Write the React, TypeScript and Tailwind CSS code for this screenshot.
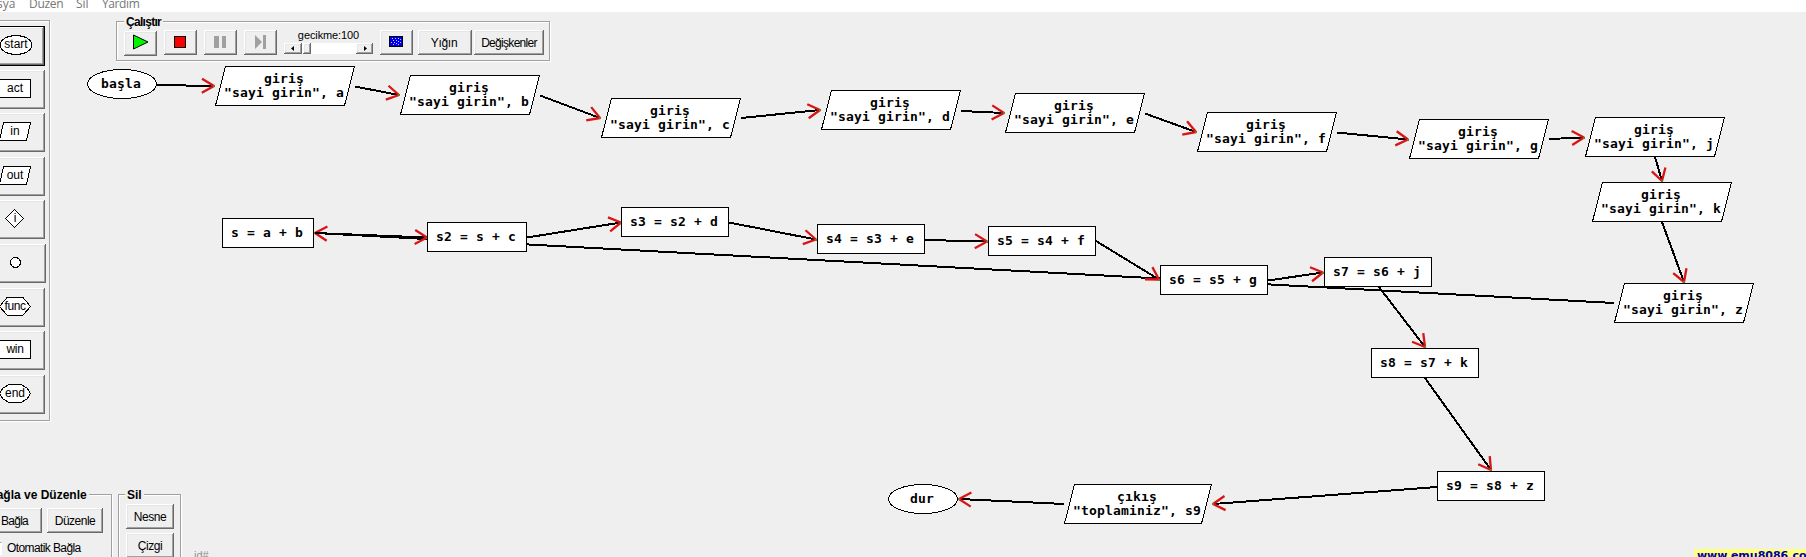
import type { ReactNode } from "react";

type Kind = "box" | "io" | "oval";
type FlowNode = { kind: Kind; x: number; y: number; w: number; lines: string[] };

const nodes: FlowNode[] = [
  { kind: "oval", x: 87, y: 69, w: 70, lines: ["başla"] },
  { kind: "io", x: 215, y: 66, w: 140, lines: ["giriş", '"sayi girin", a'] },
  { kind: "io", x: 400, y: 75, w: 140, lines: ["giriş", '"sayi girin", b'] },
  { kind: "io", x: 601, y: 98, w: 140, lines: ["giriş", '"sayi girin", c'] },
  { kind: "io", x: 821, y: 90, w: 140, lines: ["giriş", '"sayi girin", d'] },
  { kind: "io", x: 1005, y: 93, w: 140, lines: ["giriş", '"sayi girin", e'] },
  { kind: "io", x: 1197, y: 112, w: 140, lines: ["giriş", '"sayi girin", f'] },
  { kind: "io", x: 1409, y: 119, w: 140, lines: ["giriş", '"sayi girin", g'] },
  { kind: "io", x: 1585, y: 117, w: 140, lines: ["giriş", '"sayi girin", j'] },
  { kind: "io", x: 1592, y: 182, w: 140, lines: ["giriş", '"sayi girin", k'] },
  { kind: "io", x: 1614, y: 283, w: 140, lines: ["giriş", '"sayi girin", z'] },
  { kind: "box", x: 222, y: 218, w: 92, lines: ["s = a + b"] },
  { kind: "box", x: 427, y: 222, w: 100, lines: ["s2 = s + c"] },
  { kind: "box", x: 621, y: 207, w: 108, lines: ["s3 = s2 + d"] },
  { kind: "box", x: 817, y: 224, w: 108, lines: ["s4 = s3 + e"] },
  { kind: "box", x: 988, y: 226, w: 108, lines: ["s5 = s4 + f"] },
  { kind: "box", x: 1160, y: 265, w: 108, lines: ["s6 = s5 + g"] },
  { kind: "box", x: 1324, y: 257, w: 108, lines: ["s7 = s6 + j"] },
  { kind: "box", x: 1371, y: 348, w: 108, lines: ["s8 = s7 + k"] },
  { kind: "box", x: 1437, y: 471, w: 108, lines: ["s9 = s8 + z"] },
  { kind: "io", x: 1064, y: 484, w: 148, lines: ["çıkış", '"toplaminiz", s9'] },
  { kind: "oval", x: 888, y: 484, w: 70, lines: ["dur"] },
];

const edges: [number, number, number, number][] = [
  [157, 85, 214, 86],
  [355, 86.5, 399, 95],
  [540, 95.5, 600, 118],
  [741, 118, 820, 110],
  [961, 111, 1004, 113],
  [1145, 113.5, 1196, 132],
  [1337, 132.5, 1408, 139.5],
  [1549, 139, 1584, 137.5],
  [1655, 157, 1662, 181],
  [1662, 222, 1684, 282],
  [1614, 303, 315, 233],
  [315, 233, 427, 237.5],
  [527, 237.5, 621, 222.5],
  [729, 222.5, 816, 239.5],
  [925, 240, 987, 241.5],
  [1096, 241, 1159, 279.5],
  [1268, 280.5, 1323, 272.5],
  [1379, 287, 1425, 347],
  [1425, 378, 1491, 470],
  [1437, 487, 1213, 504],
  [1064, 504, 959, 499],
];

function Edge({ e }: { e: [number, number, number, number] }) {
  const [x1, y1, x2, y2] = e;
  const back = Math.atan2(y1 - y2, x1 - x2);
  const barb = (t: number) => `${x2 + 14 * Math.cos(back + t)},${y2 + 14 * Math.sin(back + t)}`;
  return (
    <g>
      <line x1={x1} y1={y1} x2={x2} y2={y2} stroke="#000" strokeWidth="2" />
      <polyline
        points={`${barb(0.53)} ${x2},${y2} ${barb(-0.53)}`}
        fill="none"
        stroke="#d91414"
        strokeWidth="2.3"
        strokeLinejoin="bevel"
        shapeRendering="auto"
      />
      <rect x={Math.round(x2) - 1} y={Math.round(y2) - 1} width="2" height="2" fill="#77791c" />
    </g>
  );
}

function NodeView({ n }: { n: FlowNode }) {
  const h = n.kind === "io" ? 40 : 30;
  return (
    <div className="absolute" style={{ left: n.x, top: n.y, width: n.w, height: h }}>
      <svg className="absolute inset-0" width={n.w} height={h} shapeRendering="crispEdges">
        {n.kind === "box" && <rect x="0.5" y="0.5" width={n.w - 1} height={h - 1} fill="#fff" stroke="#000" />}
        {n.kind === "io" && (
          <polygon points={`10.5,0.5 ${n.w - 0.5},0.5 ${n.w - 10.5},39.5 0.5,39.5`} fill="#fff" stroke="#000" />
        )}
        {n.kind === "oval" && (
          <ellipse cx={n.w / 2} cy={h / 2} rx={n.w / 2 - 0.5} ry={h / 2 - 0.5} fill="#fff" stroke="#000" />
        )}
      </svg>
      <div className="relative flex h-full flex-col items-center justify-center pr-[2px] whitespace-pre font-['DejaVu_Sans_Mono',monospace] text-[13px] leading-[14px] font-bold tracking-[0.174px] text-black">
        {n.lines.map((l) => (
          <span key={l}>{l}</span>
        ))}
      </div>
    </div>
  );
}

const bevel =
  "flex shrink-0 items-center justify-center whitespace-nowrap shadow-[inset_-1px_-1px_0_#696969,inset_1px_1px_0_#fff,inset_-2px_-2px_0_#a0a0a0,inset_2px_2px_0_#e6e6e6]";

function Btn({ className = "", children }: { className?: string; children?: ReactNode }) {
  return <button className={`${bevel} ${className}`}>{children}</button>;
}

const frame = "border border-[#a0a0a0] shadow-[1px_1px_0_#fff,inset_1px_1px_0_#fff]";

const tools: { label: string; shape: ReactNode; cls: string; text: string }[] = [
  { label: "start", shape: <ellipse cx="16" cy="10" rx="16" ry="9.5" />, cls: "w-[49px] mb-[4px] border border-black h-[40px] pl-[3px]", text: "" },
  { label: "act", shape: <rect x="0.5" y="0.5" width="31" height="18" />, cls: "w-[49px] mb-[4px]", text: "" },
  { label: "in", shape: <polygon points="4.5,0.5 31.5,0.5 27.5,18.5 0.5,18.5" />, cls: "w-[49px] mb-[5px]", text: "" },
  { label: "out", shape: <polygon points="4.5,0.5 31.5,0.5 27.5,18.5 0.5,18.5" />, cls: "w-[49px] mb-[4px]", text: "" },
  { label: "i", shape: <polygon points="15.5,0.5 24.5,9.5 15.5,18.5 6.5,9.5" />, cls: "w-[49px] mb-[5px]", text: "" },
  { label: "", shape: <circle cx="16.5" cy="9.5" r="5" />, cls: "w-[50px] mb-[5px]", text: "" },
  { label: "func", shape: <polygon points="0.5,9.5 8,0.5 24,0.5 31.5,9.5 24,18 8,18" />, cls: "w-[49px] mb-[4px]", text: "tracking-[-0.4px]" },
  { label: "win", shape: <rect x="0.5" y="0.5" width="31" height="18" />, cls: "w-[49px] mb-[5px]", text: "tracking-[-0.3px]" },
  { label: "end", shape: <path d="M10 0.5H22L28 4L31.5 9.5L28 15L22 18.5H10L4 15L0.5 9.5L4 4Z" />, cls: "w-[49px]", text: "" },
];

function Palette() {
  return (
    <aside className={`mt-[8px] -ml-[10px] h-[401px] w-[60px] shrink-0 pt-[5px] pl-[5px] ${frame}`}>
      {tools.map((t, i) => (
        <Btn key={i} className={`h-[39px] justify-start! pb-[2px] pl-[3px] ${t.cls}`}>
          <span className="relative flex h-[20px] w-[32px] items-center justify-center">
            <svg className="absolute inset-0" width="32" height="20" fill="#fff" stroke="#000" shapeRendering="crispEdges">
              {t.shape}
            </svg>
            <span className={`relative -mt-[2px] text-[12px] leading-[14px] ${t.text}`}>{t.label}</span>
          </span>
        </Btn>
      ))}
    </aside>
  );
}

function Toolbar() {
  return (
    <section className={`relative mt-[9px] ml-[66px] flex h-[40px] w-[434px] items-start pt-[8px] pl-[7px] ${frame}`}>
      <h2 className="absolute -top-[7px] left-[7px] bg-[#efefef] px-[2px] text-[12px] leading-[14px] font-bold tracking-[-0.7px]">
        Çalıştır
      </h2>
      <Btn className="mt-px mr-[7px] h-[25px] w-[33px]">
        <svg width="16" height="16" className="-mt-[3px]">
          <path d="M0.5 1L15 8L0.5 15Z" fill="#00f400" stroke="#000" strokeWidth="1" />
        </svg>
      </Btn>
      <Btn className="mr-[7px] h-[25px] w-[33px]">
        <span className="-mt-[2px] -ml-[1px] block h-[12px] w-[12px] border border-black bg-[#f80000]" />
      </Btn>
      <Btn className="mr-[7px] h-[25px] w-[33px] gap-[3px] pr-[2px]">
        <span className="-mt-[2px] h-[12px] w-[5px] bg-[#a0a0a0]" />
        <span className="-mt-[2px] h-[12px] w-[4px] bg-[#a0a0a0]" />
      </Btn>
      <Btn className="mr-[7px] h-[25px] w-[33px]">
        <svg width="12" height="14" className="-mt-[2px]" fill="#a0a0a0">
          <path d="M0 0L7 7L0 14Z" />
          <rect x="8" width="3" height="14" />
        </svg>
      </Btn>
      <div className="mr-[7px] w-[89px] shrink-0">
        <div className="-mt-[2px] h-[15px] text-center text-[11px] leading-[14px] tracking-[-0.1px] whitespace-nowrap">
          gecikme:100
        </div>
        <div className="flex h-[11px] bg-white">
          <Btn className="w-[18px] bg-[#f0f0f0]">
            <svg width="4" height="5" className="-mt-[1px]">
              <path d="M3 0V5L0 2.5Z" />
            </svg>
          </Btn>
          <Btn className="ml-[1px] w-[8px] bg-[#f0f0f0]" />
          <span className="flex-1" />
          <Btn className="w-[17px] bg-[#f0f0f0]">
            <svg width="4" height="5" className="-mt-[1px]">
              <path d="M1 0V5L4 2.5Z" />
            </svg>
          </Btn>
        </div>
      </div>
      <Btn className="mr-[5px] h-[25px] w-[33px]">
        <svg width="14" height="11" className="-mt-[2px] -ml-[1px]" shapeRendering="crispEdges">
          <rect width="14" height="11" fill="#000" />
          <rect x="1" y="1" width="12" height="9" fill="#0000e8" />
          <path
            d="M3 2h1v1h-1zM6 2h1v1h-1zM9 2h1v1h-1zM11 3h1v1h-1zM4 4h1v1h-1zM7 4h1v1h-1zM2 6h1v1h-1zM5 6h1v1h-1zM9 5h1v1h-1zM11 6h1v1h-1zM4 8h1v1h-1zM7 7h1v1h-1zM9 8h1v1h-1z"
            fill="#c8c8ff"
          />
        </svg>
      </Btn>
      <Btn className="mr-[2px] h-[25px] w-[54px] pr-[2px] text-[12px] tracking-[-0.3px]">Yığın</Btn>
      <Btn className="h-[25px] w-[70px] text-[12px] tracking-[-0.7px]">Değişkenler</Btn>
    </section>
  );
}

export default function App() {
  return (
    <div className="relative flex h-[557px] w-[1806px] flex-col overflow-hidden bg-[#efefef] font-['Liberation_Sans',Arial,sans-serif] text-black">
      <nav className="flex h-[12px] shrink-0 items-end overflow-hidden bg-white font-['Open_Sans',sans-serif] text-[12px] leading-[16px] text-[#777]">
        <span className="-ml-[19px] w-[48px]">Dosya</span>
        <span className="w-[47px] tracking-[-0.3px]">Düzen</span>
        <span className="w-[26px]">Sil</span>
        <span className="tracking-[-0.4px]">Yardım</span>
      </nav>

      <div className="flex h-[477px] shrink-0 items-start">
        <Palette />
        <Toolbar />
      </div>

      <div className="flex h-[68px] shrink-0 items-start pt-[5px]">
        <section className={`relative -ml-[12px] h-[80px] w-[124px] ${frame}`}>
          <h2 className="absolute -top-[7px] -left-[3px] bg-[#efefef] px-[2px] text-[12px] leading-[14px] font-bold whitespace-nowrap">
            Bağla ve Düzenle
          </h2>
          <div className="mt-[13px] flex gap-[5px]">
            <Btn className="h-[25px] w-[53px] pr-[2px] text-[12px] tracking-[-0.7px]">Bağla</Btn>
            <Btn className="h-[25px] w-[56px] text-[12px] tracking-[-0.5px]">Düzenle</Btn>
          </div>
          <label className="mt-[8px] flex items-center text-[12px] leading-[14px] tracking-[-0.6px] whitespace-nowrap">
            <span className="mr-[5px] h-[13px] w-[13px] border border-white border-t-[#a0a0a0] bg-white" />
            Otomatik Bağla
          </label>
        </section>
        <section className={`relative ml-[6px] flex h-[80px] w-[63px] flex-col gap-[4px] pt-[9px] pl-[7px] ${frame}`}>
          <h2 className="absolute -top-[7px] left-[6px] bg-[#efefef] px-[2px] text-[12px] leading-[14px] font-bold">Sil</h2>
          <Btn className="h-[25px] w-[48px] text-[12px] tracking-[-0.4px]">Nesne</Btn>
          <Btn className="h-[25px] w-[48px] text-[12px] tracking-[-0.4px]">Çizgi</Btn>
        </section>
        <span className="mt-[53px] ml-[13px] text-[11px] leading-[16px] text-[#909090]">id#</span>
        <a className="mt-[55px] -mr-[12px] ml-auto bg-[#ffff80] pl-[3px] font-['DejaVu_Sans',sans-serif] text-[11px] leading-[13px] font-bold text-[#0000a8]">
          www.emu8086.com
        </a>
      </div>

      <div className="pointer-events-none absolute inset-0">
        <svg className="absolute inset-0" width="1806" height="557" shapeRendering="crispEdges">
          {edges.map((e, i) => (
            <Edge key={i} e={e} />
          ))}
        </svg>
        {nodes.map((n, i) => (
          <NodeView key={i} n={n} />
        ))}
      </div>
    </div>
  );
}
